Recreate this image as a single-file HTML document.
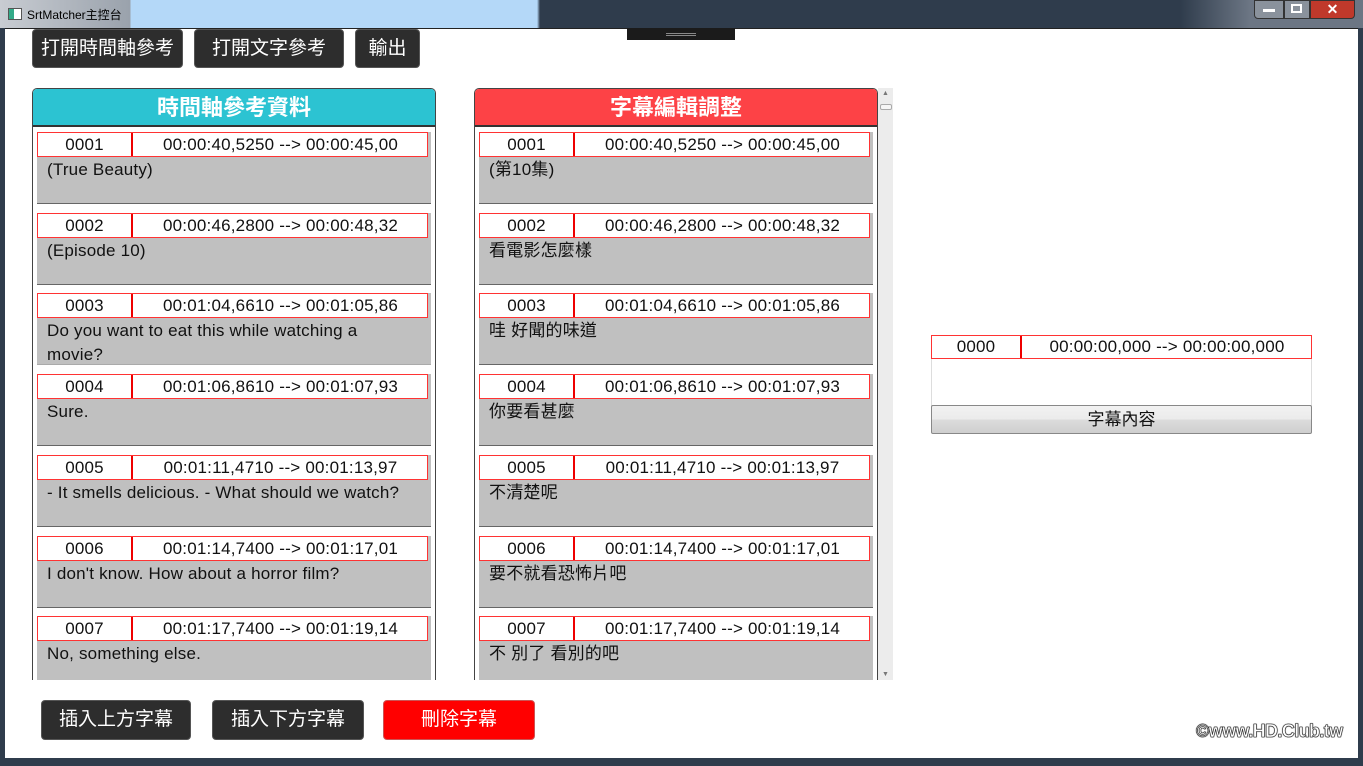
<!DOCTYPE html>
<html><head><meta charset="utf-8"><style>
*{margin:0;padding:0;box-sizing:border-box}
body{width:1363px;height:766px;overflow:hidden;position:relative;background:#2f3c4c;font-family:"Liberation Sans","Noto Sans CJK TC",sans-serif}
.a{position:absolute}
.tb{left:0;top:0;width:1363px;height:28px;background:linear-gradient(90deg,#c8ccd2 0,#9aa2ac 130px,#b4d8f8 131px,#b4d8f8 537px,#2f3c4c 540px,#2f3c4c 1180px,#6c7684 1250px)}
.client{left:5px;top:28px;width:1353px;height:730px;background:#fff;border-top:1px solid #222}
.btn{position:absolute;background:#2d2d2d;color:#fff;border-radius:4px;font-size:19px;text-align:center;border:1px solid #555}
.panel{position:absolute;top:88px;width:404px;height:592px;border:1px solid #444;border-bottom:none;border-radius:5px 5px 0 0;overflow:hidden}
.ph{height:38px;color:#fff;font-weight:bold;font-size:22px;text-align:center;line-height:38px;border-bottom:2px solid #333}
.it{position:absolute;left:4px;width:394px;height:72px;background:#c0c0c0;border-bottom:1px solid #666}
.hd{position:absolute;left:0;top:0;width:391px;height:25px;background:#fff;border:1px solid #f33;font-size:17px;line-height:23px;color:#111;letter-spacing:0.2px}
.hd .n{position:absolute;left:0;width:95px;text-align:center;border-right:2px solid #e00;height:23px}
.hd .t{position:absolute;left:96px;right:0;text-align:center}
.tx{position:absolute;left:10px;top:26px;font-size:17px;line-height:24px;color:#111;width:340px;letter-spacing:0.2px}
</style></head><body>
<div class="a tb"></div>
<div class="a" style="left:8px;top:8px;width:14px;height:12px;border:1px solid #555;background:linear-gradient(90deg,#3a8 0,#3a8 5px,#fff 5px)"></div>
<div class="a" style="left:27px;top:6px;font-size:12px;color:#000">SrtMatcher主控台</div>
<div class="a" style="left:1254px;top:0;width:30px;height:19px;background:#8a929c;border:1px solid #333;border-radius:0 0 0 4px"></div>
<div class="a" style="left:1284px;top:0;width:26px;height:19px;background:#8a929c;border:1px solid #333"></div>
<div class="a" style="left:1310px;top:0;width:45px;height:19px;background:#c0392b;border:1px solid #333;border-radius:0 0 4px 0;color:#fff;font-size:14px;font-weight:bold;text-align:center;line-height:17px">✕</div>
<div class="a" style="left:1263px;top:9px;width:12px;height:3px;background:#fff"></div>
<div class="a" style="left:1291px;top:4px;width:11px;height:9px;border:2px solid #fff"></div>
<div class="a client"></div>
<div class="a" style="left:627px;top:28px;width:108px;height:12px;background:#1b1b1b"><div class="a" style="left:39px;top:5px;width:30px;height:3px;border-top:1px solid #888;border-bottom:1px solid #888"></div></div>

<div class="btn" style="left:32px;top:29px;width:151px;height:39px;line-height:37px">打開時間軸參考</div>
<div class="btn" style="left:194px;top:29px;width:150px;height:39px;line-height:37px">打開文字參考</div>
<div class="btn" style="left:355px;top:29px;width:65px;height:39px;line-height:37px">輸出</div>

<div class="panel" style="left:32px"><div class="ph" style="background:#2cc3d2">時間軸參考資料</div>
<div class="it" style="top:43px"><div class="hd"><span class="n">0001</span><span class="t">00:00:40,5250 --&gt; 00:00:45,00</span></div><div class="tx">(True Beauty)</div></div>
<div class="it" style="top:124px"><div class="hd"><span class="n">0002</span><span class="t">00:00:46,2800 --&gt; 00:00:48,32</span></div><div class="tx">(Episode 10)</div></div>
<div class="it" style="top:204px;border-bottom-color:#aaa"><div class="hd"><span class="n">0003</span><span class="t">00:01:04,6610 --&gt; 00:01:05,86</span></div><div class="tx">Do you want to eat this while watching a movie?</div></div>
<div class="it" style="top:285px"><div class="hd"><span class="n">0004</span><span class="t">00:01:06,8610 --&gt; 00:01:07,93</span></div><div class="tx">Sure.</div></div>
<div class="it" style="top:366px"><div class="hd"><span class="n">0005</span><span class="t">00:01:11,4710 --&gt; 00:01:13,97</span></div><div class="tx" style="width:380px">- It smells delicious. - What should we watch?</div></div>
<div class="it" style="top:447px"><div class="hd"><span class="n">0006</span><span class="t">00:01:14,7400 --&gt; 00:01:17,01</span></div><div class="tx">I don't know. How about a horror film?</div></div>
<div class="it" style="top:527px"><div class="hd"><span class="n">0007</span><span class="t">00:01:17,7400 --&gt; 00:01:19,14</span></div><div class="tx">No, something else.</div></div>
</div>

<div class="panel" style="left:474px"><div class="ph" style="background:#fd4246">字幕編輯調整</div>
<div class="it" style="top:43px"><div class="hd"><span class="n">0001</span><span class="t">00:00:40,5250 --&gt; 00:00:45,00</span></div><div class="tx">(第10集)</div></div>
<div class="it" style="top:124px"><div class="hd"><span class="n">0002</span><span class="t">00:00:46,2800 --&gt; 00:00:48,32</span></div><div class="tx">看電影怎麼樣</div></div>
<div class="it" style="top:204px"><div class="hd"><span class="n">0003</span><span class="t">00:01:04,6610 --&gt; 00:01:05,86</span></div><div class="tx">哇 好聞的味道</div></div>
<div class="it" style="top:285px"><div class="hd"><span class="n">0004</span><span class="t">00:01:06,8610 --&gt; 00:01:07,93</span></div><div class="tx">你要看甚麼</div></div>
<div class="it" style="top:366px"><div class="hd"><span class="n">0005</span><span class="t">00:01:11,4710 --&gt; 00:01:13,97</span></div><div class="tx">不清楚呢</div></div>
<div class="it" style="top:447px"><div class="hd"><span class="n">0006</span><span class="t">00:01:14,7400 --&gt; 00:01:17,01</span></div><div class="tx">要不就看恐怖片吧</div></div>
<div class="it" style="top:527px"><div class="hd"><span class="n">0007</span><span class="t">00:01:17,7400 --&gt; 00:01:19,14</span></div><div class="tx">不 別了 看別的吧</div></div>
</div>
<div class="a" style="left:878px;top:88px;width:15px;height:592px;background:#ececec"><div class="a" style="left:2px;top:16px;width:12px;height:6px;border:1px solid #aaa;border-radius:2px;background:#f6f6f6"></div><div class="a" style="left:4px;top:2px;font-size:7px;color:#777">▲</div><div class="a" style="left:4px;bottom:2px;font-size:7px;color:#777">▼</div></div>

<div class="a" style="left:931px;top:335px;width:381px;height:71px;border:1px solid #ddd;background:#fff"></div>
<div class="hd" style="left:931px;top:335px;width:381px;height:24px;position:absolute"><span class="n" style="width:90px;height:22px;line-height:22px">0000</span><span class="t" style="left:91px;line-height:22px">00:00:00,000 --&gt; 00:00:00,000</span></div>
<div class="a" style="left:931px;top:405px;width:381px;height:29px;border:1px solid #888;border-radius:2px;background:linear-gradient(#f2f2f2,#ebebeb 50%,#dcdcdc 51%,#cfcfcf);text-align:center;font-size:17px;line-height:27px;color:#111">字幕內容</div>

<div class="btn" style="left:41px;top:700px;width:150px;height:40px;line-height:38px">插入上方字幕</div>
<div class="btn" style="left:212px;top:700px;width:152px;height:40px;line-height:38px">插入下方字幕</div>
<div class="btn" style="left:383px;top:700px;width:152px;height:40px;line-height:38px;background:#f00;border-color:#c55">刪除字幕</div>
<div class="a" style="left:1196px;top:721px;font-size:18px;font-weight:bold;color:#fff;-webkit-text-stroke:0.6px #333;text-shadow:0 0 1px #000,0 0 1px #000;letter-spacing:-0.6px">©www.HD.Club.tw</div>
</body></html>
